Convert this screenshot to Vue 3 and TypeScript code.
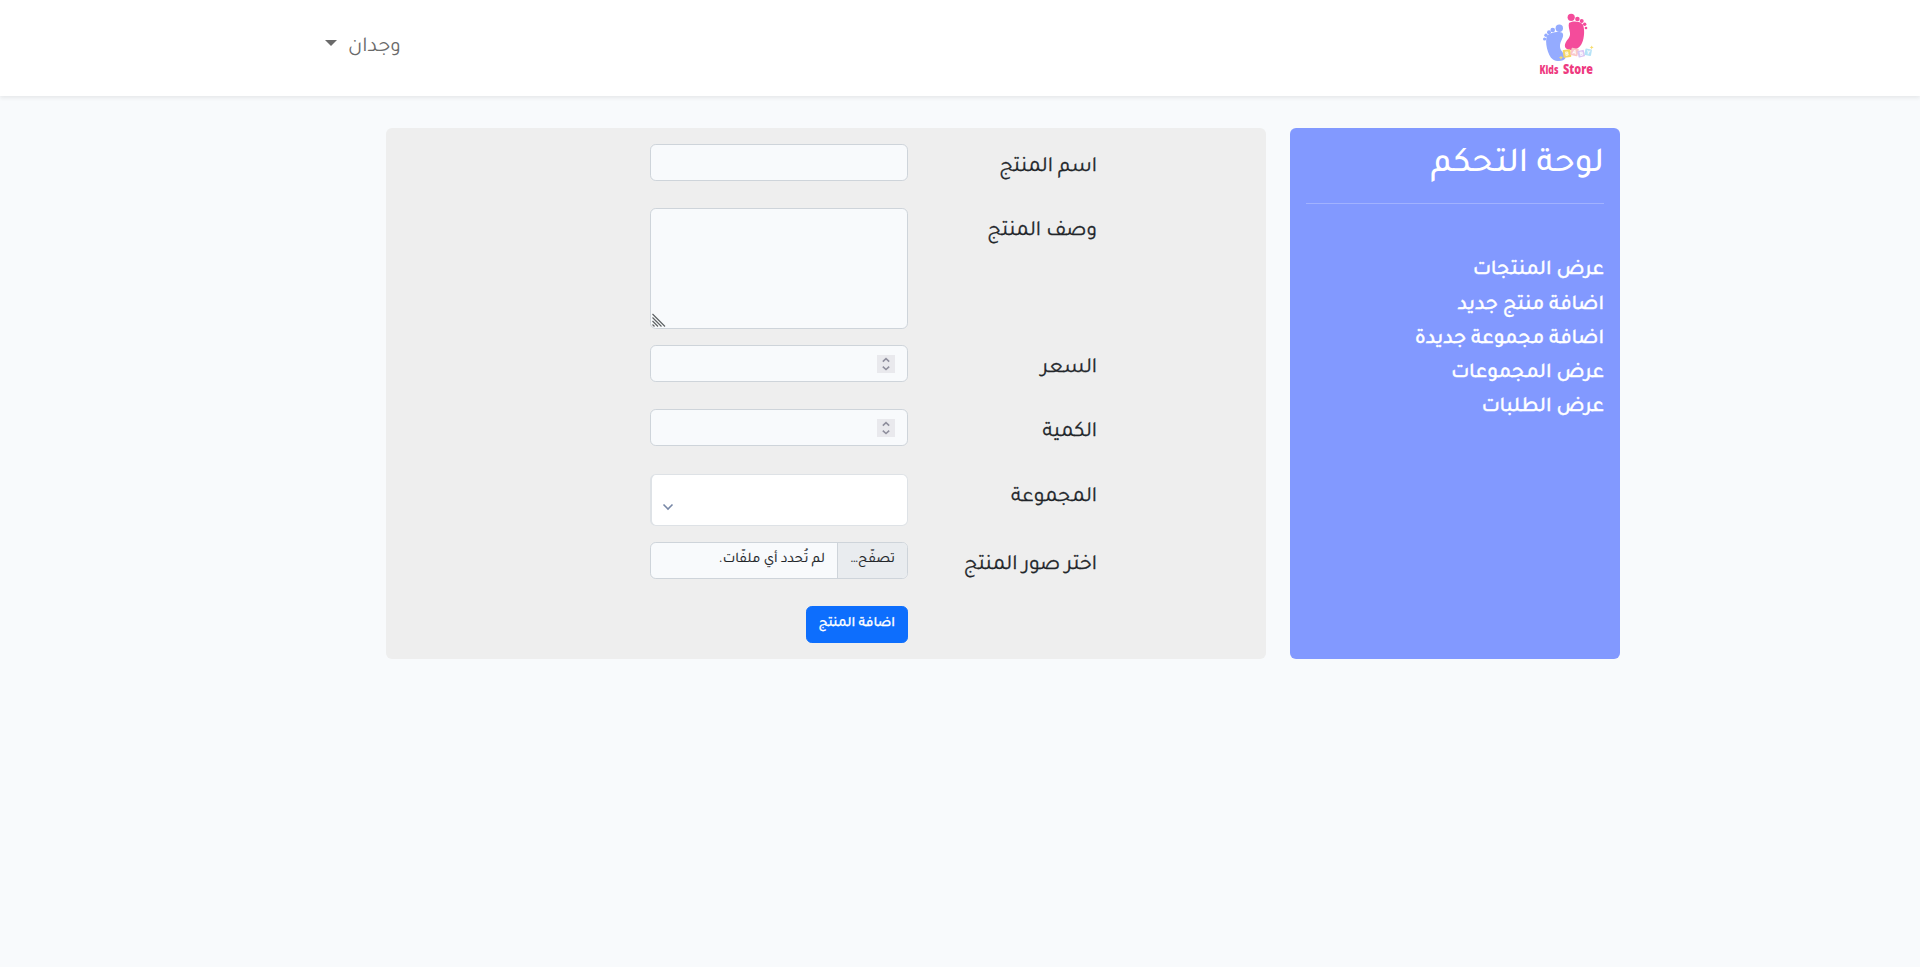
<script setup lang="ts">
type Kind = 'text' | 'area' | 'number' | 'select' | 'file'
interface Field { label: string; kind: Kind }

const links: string[] = [
  'عرض المنتجات',
  'اضافة منتج جديد',
  'اضافة مجموعة جديدة',
  'عرض المجموعات',
  'عرض الطلبات',
]
const fields: Field[] = [
  { label: 'اسم المنتج', kind: 'text' },
  { label: 'وصف المنتج', kind: 'area' },
  { label: 'السعر', kind: 'number' },
  { label: 'الكمية', kind: 'number' },
  { label: 'المجموعة', kind: 'select' },
  { label: 'اختر صور المنتج', kind: 'file' },
]
</script>

<template>
  <div class="page" dir="rtl">
    <header class="navbar">
      <a class="brand" aria-label="Kids Store">
        <svg width="100" height="96" viewBox="0 0 100 96" direction="ltr">
          <g fill="#94abff">
            <path d="M27 36C30 32 40 31 42.500 33C45 37 39.500 41 40 47C40.500 52 46 54 45.500 58C44 61.500 37 62 33 59.500C27.500 56 24.500 41 27 36Z" />
            <circle cx="39.300" cy="28.300" r="3.700" />
            <circle cx="32.700" cy="30" r="2.300" />
            <circle cx="29" cy="32.300" r="2" />
            <circle cx="26" cy="35.300" r="1.700" />
            <circle cx="24.600" cy="39" r="1.600" />
          </g>
          <g fill="#f44c9b">
            <path d="M49 23C51 21 59 20.500 62.500 24C65 28 64.500 38 62 43C60 48 55 50 51 50C45 50 44 46 45.500 43C47 39 50.500 38 50 33C49.500 29 48 26 49 23Z" />
            <circle cx="51.200" cy="17.300" r="3.600" />
            <circle cx="57.400" cy="19" r="2.300" />
            <circle cx="61.700" cy="20.900" r="2" />
            <circle cx="64.700" cy="24.200" r="1.700" />
            <circle cx="66" cy="28" r="1.300" />
          </g>
          <g class="cube">
            <g transform="translate(47 53.500) rotate(-8)"><rect x="-3.900" y="-3.900" width="7.800" height="7.800" rx=".8" fill="#f5d767" /><text y="2">B</text></g>
            <g transform="translate(54.500 52) rotate(14)"><rect x="-3.700" y="-3.700" width="7.400" height="7.400" rx=".8" fill="#fac6c8" /><text y="2">A</text></g>
            <g transform="translate(61.200 53.700) rotate(-14)"><rect x="-3.300" y="-3.300" width="6.600" height="6.600" rx=".8" fill="#d9c5f3" /><text y="2">B</text></g>
            <g transform="translate(68.200 52.300) rotate(10)"><rect x="-3.300" y="-3.300" width="6.600" height="6.600" rx=".8" fill="#b5e3f7" /><text y="2">Y</text></g>
          </g>
          <g fill="#f7dc6b">
            <path d="M41 55.500l.7 1.500 1.500.6-1.500.7-.7 1.500-.7-1.500-1.500-.7 1.500-.6z" />
            <path d="M71.700 45.500l.6 1.300 1.400.6-1.400.6-.6 1.400-.6-1.400-1.400-.6 1.400-.6z" />
          </g>
          <g class="word">
            <text x="19.500" y="74" font-size="12" textLength="19" lengthAdjust="spacingAndGlyphs">Kids</text>
            <text x="43" y="74" font-size="14" textLength="30" lengthAdjust="spacingAndGlyphs">Store</text>
          </g>
        </svg>
      </a>
      <div class="user"><span>وجدان</span><i class="caret"></i></div>
    </header>

    <main class="layout">
      <aside class="side">
        <h1>لوحة التحكم</h1>
        <hr>
        <nav><a v-for="l in links" :key="l">{{ l }}</a></nav>
      </aside>

      <section class="panel">
        <div v-for="f in fields" :key="f.label" class="row">
          <label>{{ f.label }}</label>
          <div class="control" :class="f.kind">
            <template v-if="f.kind === 'file'">
              <span class="browse">تصفّح…</span><span class="chosen">لم تُحدد أي ملفّات.</span>
            </template>
            <svg v-else-if="f.kind === 'number'" class="spin" width="18" height="18" viewBox="0 0 18 18">
              <rect width="18" height="18" fill="#e9e9ed" />
              <path d="M5.800 6.600L9 3.700l3.200 2.900M5.800 11.600L9 14.500l3.200-2.900" fill="none" stroke="#8f8f9d" stroke-width="1.600" />
            </svg>
            <svg v-else-if="f.kind === 'area'" class="grip" width="14" height="14" viewBox="0 0 14 14">
              <path d="M.5 1L13 13.500M.5 4.500L9.500 13.500M.5 8L6 13.500M.5 11.500L2.500 13.500" fill="none" stroke="#5f6265" stroke-width="1.200" />
            </svg>
            <svg v-else-if="f.kind === 'select'" class="arrow" width="12" height="8" viewBox="0 0 12 8">
              <path d="M1.500 1.500L6 6l4.500-4.500" fill="none" stroke="#7787a6" stroke-width="1.600" />
            </svg>
          </div>
        </div>
        <div class="row actions"><button type="button">اضافة المنتج</button></div>
      </section>
    </main>
  </div>
</template>

<style>
body { margin: 0; background: #f8fafc; }
</style>

<style scoped>
.page {
  min-height: 967px;
  background: #f8fafc;
  font: 14.400px/1.6 Tajawal, 'Noto Sans Arabic', 'DejaVu Sans', sans-serif;
  color: #212529;
}
.page *, .page { box-sizing: border-box; }
.navbar {
  height: 96px;
  background: #fff;
  box-shadow: 0 2px 4px rgba(0, 0, 0, .075);
  display: flex;
  justify-content: space-between;
  padding: 0 300px 0 325px;
}
.brand, .brand svg { display: block; }
.cube text { font: 700 5.500px 'Open Sans', sans-serif; fill: #fff; text-anchor: middle; }
.word { fill: #ee3a80; font-family: 'Open Sans', sans-serif; font-weight: 800; }
.user {
  display: flex;
  align-items: flex-start;
  gap: 11px;
  padding-top: 31px;
  font-size: 21.300px;
  color: #6a6a6a;
}
.caret {
  margin-top: 9px;
  border: 6.200px solid transparent;
  border-top-color: #6a6a6a;
  border-bottom: 0;
}
.layout { display: flex; gap: 24px; margin: 32px 300px 0 386px; }
.side {
  width: 330px;
  padding: 16px;
  background: #8299ff;
  border-radius: 6px;
  color: #fff;
}
h1 {
  height: 43px;
  margin: 0;
  padding-top: 1px;
  font-size: 35.200px;
  line-height: 43px;
  font-weight: 500;
}
hr { margin: 16px 0 50px; border: 0; height: 1px; background: rgba(255, 255, 255, .25); }
nav {
  display: flex;
  flex-direction: column;
  padding-top: .3px;
  font-size: 21px;
  line-height: 34.300px;
  font-weight: 500;
  -webkit-text-stroke: .35px currentColor;
}
.panel {
  flex: 1;
  padding: 16px 170px 16px 0;
  display: flex;
  flex-direction: column;
  gap: 16px;
  background: #eee;
  border-radius: 6px;
}
.row { display: flex; align-items: flex-start; min-height: 48px; }
.row:nth-child(5) { padding-top: 1px; }
label {
  width: 188px;
  margin-right: -1px;
  margin-left: 1px;
  padding-top: 8px;
  font-size: 21.200px;
  -webkit-text-stroke: .3px currentColor;
}
.control {
  width: 258px;
  height: 37px;
  display: flex;
  overflow: hidden;
  background: #f8fafc;
  border: 1px solid #ced4da;
  border-radius: 5.800px;
}
.area { height: 121px; align-items: flex-end; justify-content: flex-end; padding: 1px; }
.number { align-items: center; padding-right: 12px; }
.select {
  height: 52px;
  align-items: flex-end;
  justify-content: flex-end;
  padding: 0 0 14px 10px;
  background: #fff;
  border-color: #dee2e6;
  border-left-width: 2px;
}
.browse, .chosen {
  padding: 6px 12px 0;
  white-space: nowrap;
  -webkit-text-stroke: .2px currentColor;
}
.browse { width: 70px; background: #e9ecef; border-left: 1px solid #ced4da; }
.chosen { padding-right: 12px; }
.actions { min-height: 37px; padding-right: 188px; }
button {
  width: 102px;
  height: 37px;
  padding: 7px 12px;
  border: 1px solid #0d6efd;
  border-radius: 5.800px;
  background: #0d6efd;
  color: #fff;
  font: 500 14px/21px Tajawal, 'Noto Sans Arabic', 'DejaVu Sans', sans-serif;
  -webkit-text-stroke: .3px currentColor;
  white-space: nowrap;
  display: flex;
}
</style>
